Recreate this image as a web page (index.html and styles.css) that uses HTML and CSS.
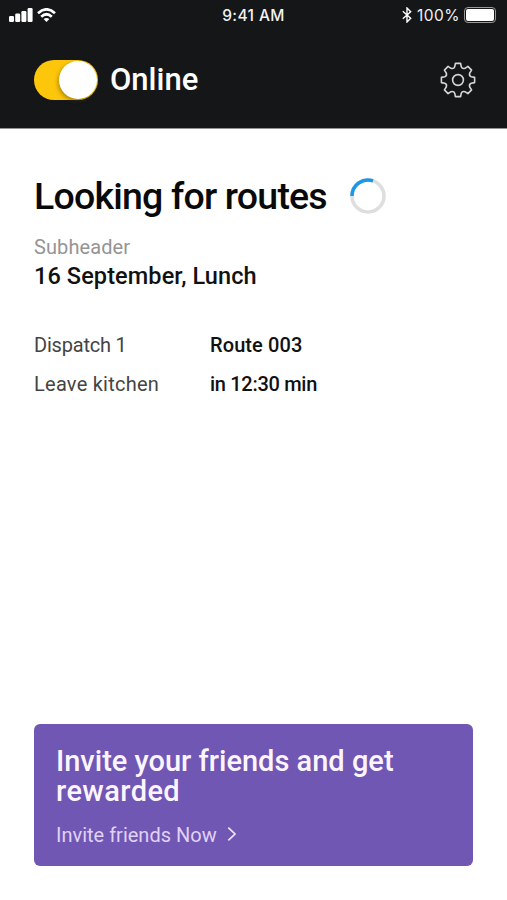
FILE: index.html
```html
<!DOCTYPE html>
<html lang="en">
<head>
<meta charset="utf-8">
<title>Online</title>
<link rel="stylesheet" href="styles.css">
</head>
<body>
<div class="screen">
  <header class="top">
    <div class="status">
      <div class="status-left">
        <svg width="24" height="14" viewBox="0 0 24 14" fill="#fff"><rect x="0" y="8" width="5" height="6" rx="1.2"/><rect x="6.2" y="5.6" width="5" height="8.4" rx="1.2"/><rect x="12.4" y="3" width="5" height="11" rx="1.2"/><rect x="18.6" y="0" width="5" height="14" rx="1.2"/></svg>
        <svg width="19" height="14" viewBox="0 0 19 14" fill="none" stroke="#fff" stroke-width="2.7"><path d="M1 5.2Q9.500-2.500 18 5.200"/><path d="M4.200 8.700Q9.500 3.800 14.800 8.700"/><path d="M9.500 14L6.600 11Q9.500 8.800 12.400 11Z" fill="#fff" stroke="none"/></svg>
      </div>
      <span class="clock">9:41 AM</span>
      <div class="status-right">
        <svg width="10" height="16" viewBox="0 0 10 16" fill="none" stroke="#fff" stroke-width="1.400"><path d="M.8 4.200L8.700 11.300L5 15V1L8.700 4.700L.8 11.800"/></svg>
        <span class="percent">100%</span>
        <span class="battery"><i></i></span>
      </div>
    </div>
    <div class="bar">
      <span class="toggle"><i></i></span>
      <span class="state">Online</span>
      <svg class="gear" width="36" height="36" viewBox="-18 -18 36 36" fill="none" stroke="#d6d6d6" stroke-width="1.600" stroke-linejoin="round"><path d="M-2.600-16.600H2.600L3.300-13.200Q4.200-10.800 7-11.700L9.900-13.600L13.600-9.900L11.700-7Q10.800-4.200 13.200-3.300L16.600-2.600V2.600L13.200 3.300Q10.800 4.200 11.700 7L13.600 9.900L9.900 13.600L7 11.700Q4.200 10.800 3.300 13.200L2.600 16.600H-2.600L-3.300 13.200Q-4.200 10.800-7 11.700L-9.900 13.600L-13.600 9.900L-11.700 7Q-10.800 4.200-13.200 3.300L-16.600 2.600V-2.600L-13.200-3.300Q-10.800-4.200-11.700-7L-13.600-9.900L-9.900-13.600L-7-11.700Q-4.200-10.800-3.300-13.200Z"/><circle r="5.400"/></svg>
    </div>
  </header>
  <main class="content">
    <div class="heading">
      <h1>Looking for routes</h1>
      <svg class="spinner" width="36" height="36" viewBox="0 0 36 36" fill="none" stroke-width="3.500"><circle cx="18" cy="18" r="16" stroke="#dedede"/><path d="M2 18A16 16 0 0 1 23 2.800" stroke="#1c96e8"/></svg>
    </div>
    <p class="sub">Subheader</p>
    <p class="date">16 September, Lunch</p>
    <dl class="details">
      <dt class="d1">Dispatch 1</dt><dd class="v1">Route 003</dd>
      <dt class="d2">Leave kitchen</dt><dd class="v2">in 12:30 min</dd>
    </dl>
  </main>
  <section class="card">
    <h2><span class="l1">Invite your friends and get</span><br><span class="l2">rewarded</span></h2>
    <a class="link"><span>Invite friends Now</span><svg width="10" height="16" viewBox="0 0 10 16" fill="none" stroke="#efe4ff" stroke-width="1.700"><path d="M1.300 1.600L8 8L1.300 14.400"/></svg></a>
  </section>
</div>
</body>
</html>
```

FILE: styles.css
```css
* { box-sizing: border-box; margin: 0; padding: 0; }
body { background: #fff; font-family: Roboto, sans-serif; color: #111; }
.screen { width: 507px; height: 900px; display: flex; flex-direction: column; overflow: hidden; }
.top { height: 129px; background: #141617; border-bottom: 1px solid #929394; }
.status { height: 30px; padding: 0 11px 0 9px; display: grid; grid-template-columns: 1fr auto 1fr; align-items: center; color: #f2f2f2; font-family: Inter, sans-serif; font-size: 15.500px; }
.status-left { display: flex; gap: 4px; align-items: center; height: 28px; }
.clock { font-weight: 500; letter-spacing: .4px; margin-left: 2px; }
.status-right { display: flex; justify-content: flex-end; align-items: center; gap: 5px; height: 28px; }
.percent { font-size: 15.500px; letter-spacing: .5px; margin-right: -1px; }
.battery { width: 32px; height: 16px; border: 1px solid #999; border-radius: 4px; padding: 1px; }
.battery i { display: block; height: 100%; background: #fff; border-radius: 2px; }
.bar { height: 99px; padding: 0 31px 0 34px; display: flex; align-items: center; }
.toggle { width: 64px; height: 40px; border-radius: 20px; background: #fdc60b; padding: 1px; display: flex; justify-content: flex-end; }
.toggle i { width: 38px; height: 38px; border-radius: 50%; background: #fff; box-shadow: -1px 2px 4px rgba(80,55,0,.45); }
.state { margin-left: 12px; color: #fff; font-size: 31px; font-weight: 500; }
.gear { margin-left: auto; }
.content { padding: 42px 34px 0; flex: 1; }
.heading { display: flex; height: 50px; align-items: center; justify-content: space-between; width: 352px; }
h1 { font-size: 37.500px; line-height: 49px; font-weight: 500; letter-spacing: -.8px; white-space: nowrap; color: #090909; }
.sub { margin-top: 14px; height: 24px; line-height: 24px; font-size: 20px; font-weight: 400; letter-spacing: .1px; color: #949494; }
.date { height: 34px; line-height: 34px; font-size: 23.500px; font-weight: 500; letter-spacing: .1px; white-space: nowrap; }
.details { margin-top: 33px; display: grid; grid-template-columns: 176px 1fr; grid-auto-rows: 39px; line-height: 39px; font-size: 20px; }
dt { color: #444; font-weight: 400; }
.d1 { letter-spacing: -.2px; }
.d2 { letter-spacing: .25px; }
dd { font-weight: 500; }
.v1 { letter-spacing: .1px; }
.v2 { letter-spacing: -.3px; }
.card { width: 439px; height: 142px; margin: 0 34px 34px; padding: 22px; border-radius: 6px; background: #7057b3; color: #fcf5ff; }
h2 { font-size: 29px; line-height: 30px; font-weight: 500; white-space: nowrap; }
.l2 { letter-spacing: .4px; }
.link { display: flex; gap: 10px; align-items: center; margin-top: 17px; height: 24px; font-size: 20px; font-weight: 400; color: #e0d2f5; }
.link svg { position: relative; top: -1px; }
```
